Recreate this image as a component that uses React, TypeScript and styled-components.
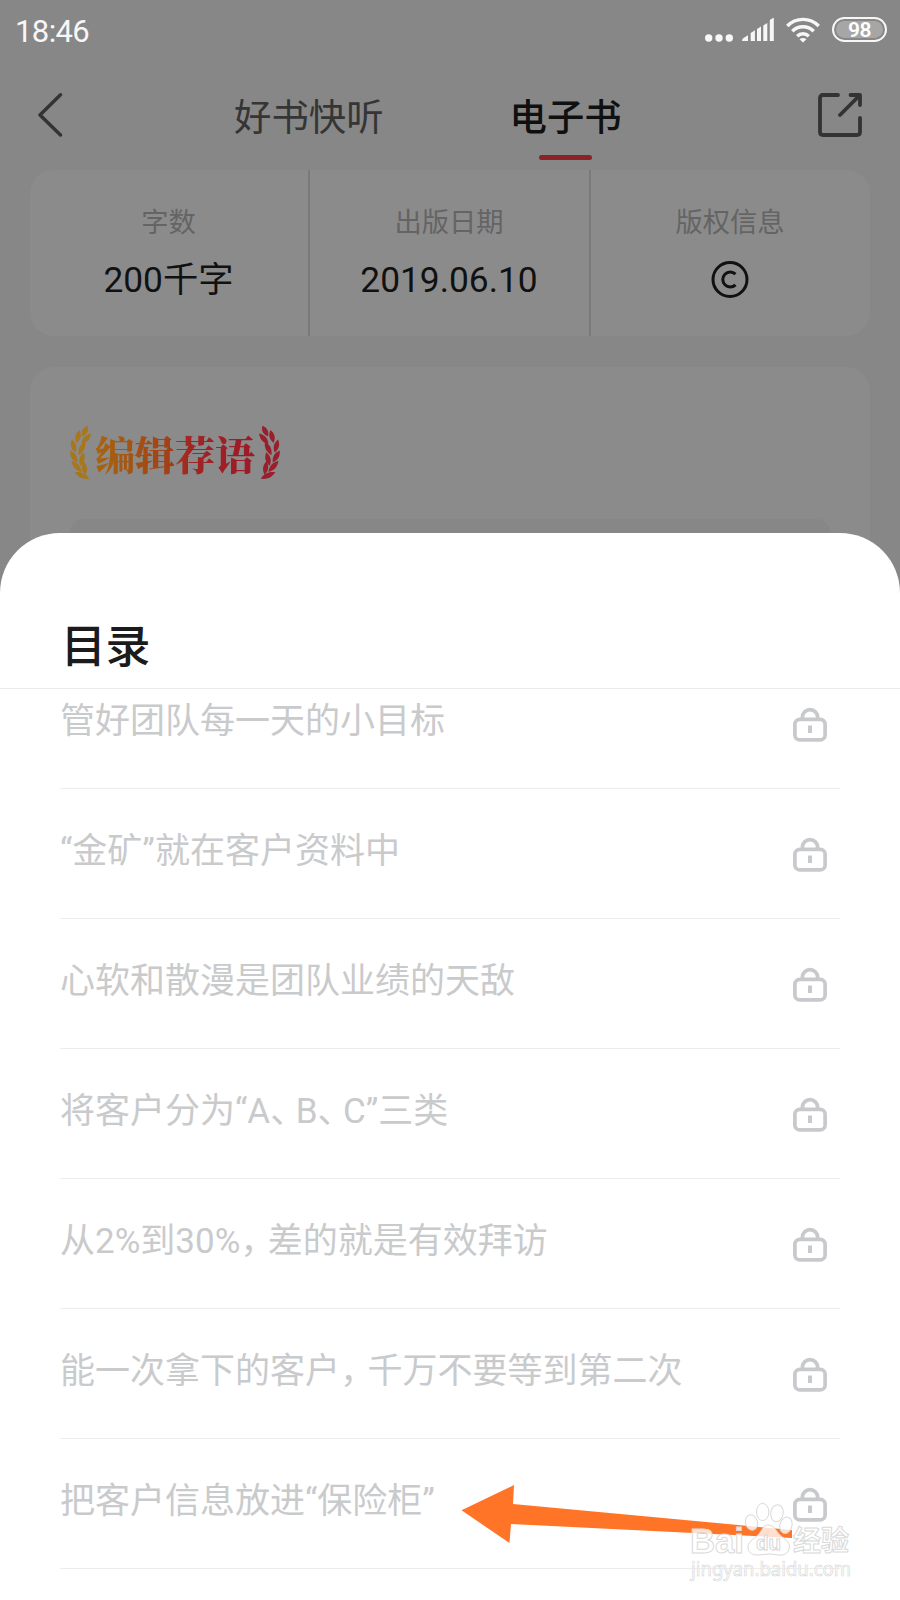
import React from "react";
import styled, { createGlobalStyle } from "styled-components";

const sans = `Roboto, "Noto Sans CJK SC", sans-serif`;

const GlobalStyle = createGlobalStyle`
  * { box-sizing: border-box; }
  body { margin: 0; background: #878787; font-family: ${sans}; }
  svg { display: block; }
`;

const Screen = styled.div`
  width: 900px;
  height: 1600px;
  position: relative;
  overflow: hidden;
  display: flex;
  flex-direction: column;
  background: #878787;
`;

const Backdrop = styled.div`
  height: 613px;
  flex: none;
  display: flex;
  flex-direction: column;
  background: #878787;
`;

const StatusBar = styled.div`
  height: 62px;
  flex: none;
  padding: 0 13px 0 15px;
  display: flex;
  align-items: center;
  justify-content: space-between;
`;

const Clock = styled.span`
  padding-top: 2px;
  font: 400 31px/60px ${sans};
  letter-spacing: -0.6px;
  color: #f7f7f7;
`;

const StatusIcons = styled.div`
  display: flex;
  align-items: center;
  margin-top: -3px;
`;

const IconGroup = styled.div`
  display: flex;
  gap: 9px;
  margin-top: 1px;

  svg:last-child { margin-left: 3px; }
`;

const Battery = styled.div`
  width: 55px;
  height: 25px;
  margin-left: 12px;
  border: 2px solid #f7f7f7;
  border-radius: 13px;
  padding: 2px;
  display: flex;
`;

const BatteryLevel = styled.span`
  flex: 1;
  border-radius: 9px;
  background: #a6a6a6;
  color: #fff;
  font: 600 21px/19px ${sans};
  letter-spacing: -0.5px;
  text-align: center;
`;

const NavBar = styled.nav`
  height: 108px;
  flex: none;
  padding: 29px 38px 0;
  display: flex;
  align-items: flex-start;
`;

const Tabs = styled.div`
  flex: 1;
  display: flex;
  justify-content: flex-start;
  padding: 4px 0 0 171px;
  gap: 126px;
`;

const Tab = styled.div<{ $active?: boolean }>`
  display: flex;
  flex-direction: column;
  align-items: center;
  gap: 14px;
  font: ${(p) => (p.$active ? 500 : 400)} 37.4px/46px ${sans};
  color: ${(p) => (p.$active ? "#101010" : "#353535")};

  &::after {
    content: "";
    width: 53px;
    height: 5px;
    border-radius: 3px;
    background: ${(p) => (p.$active ? "#8b2226" : "transparent")};
  }
`;

const Card = styled.section`
  margin: 0 30px;
  border-radius: 24px;
  background: #8b8b8b;
`;

const FactsCard = styled(Card)`
  height: 166px;
  flex: none;
  display: grid;
  grid-template-columns: 278px 281px 281px;
`;

const Fact = styled.div`
  padding: 34px 1px 0 0;
  display: flex;
  flex-direction: column;
  align-items: center;
  gap: 17px;

  & + & { border-left: 2px solid #7a7a7a; }
`;

const FactLabel = styled.div`
  font: 400 27.3px/38px ${sans};
  color: #646464;
`;

const FactValue = styled.div`
  height: 42px;
  display: flex;
  align-items: center;
  font: 400 35.3px/42px ${sans};
  color: #111;
`;

const ReviewCard = styled(Card)`
  flex: 1;
  min-height: 0;
  margin-top: 31px;
  padding: 58px 40px 0;
  border-radius: 24px 24px 0 0;
`;

const ReviewTitle = styled.div`
  height: 56px;
  display: flex;
  align-items: center;
  gap: 3px;
`;

const ReviewName = styled.h2`
  margin: 0;
  font: 900 40px/56px "Noto Serif CJK SC", "Noto Serif SC", "Noto Sans CJK SC", serif;
  color: transparent;
  background: linear-gradient(90deg, #a8650d, #a14217 45%, #a02523 60%, #9c1a28);
  background-clip: text;
  -webkit-background-clip: text;
`;

const Quote = styled.div`
  height: 88px;
  margin-top: 38px;
  border-radius: 14px;
  background: #878787;
`;

const Sheet = styled.main`
  height: 1067px;
  flex: none;
  margin-top: -80px;
  border-radius: 60px 60px 0 0;
  background: #fff;
  overflow: hidden;
`;

const SheetTitle = styled.h1`
  margin: 0;
  height: 156px;
  padding: 83px 0 0 61px;
  border-bottom: 1px solid #ebebeb;
  font: 500 45px/64px ${sans};
  letter-spacing: -0.5px;
  color: #1b1b1b;
`;

const ChapterViewport = styled.div`
  height: 911px;
  overflow: hidden;
`;

const ChapterList = styled.ul`
  list-style: none;
  margin: -30px 60px 0;
  padding: 0;
`;

const Chapter = styled.li`
  height: 130px;
  padding: 0 13px 4px 0;
  display: flex;
  align-items: center;
  justify-content: space-between;
  border-bottom: 1px solid #ededed;
  font: 400 35px/48px ${sans};
  color: #c9cacc;

  svg { margin-top: 5px; }
`;

const Punctuation = styled.span<{ $tighten: number }>`
  letter-spacing: -${(p) => p.$tighten}px;
`;

const Annotation = styled.svg`
  position: absolute;
  left: 440px;
  top: 1470px;
`;

const LockIcon = () => (
  <svg width="34" height="35" viewBox="0 0 34 35" fill="none" stroke="#c8c9cc" strokeWidth="3.7">
    <path d="M9.4 12V10.200a7.600 7.600 0 0 1 15.200 0V12" />
    <rect x="1.900" y="12.300" width="30.200" height="20.600" rx="5" />
    <path d="M17 18.500v7.500" strokeWidth="4" />
  </svg>
);

const BarsIcon = () => (
  <svg width="32" height="26" viewBox="0 0 32 26" fill="#f7f7f7">
    <path d="M0 24q0-2 1.500-3l4.500-2.700V24zM8.700 24v-8l4.200-2.700V24zM15 24V12l4-2.600V24zM21.300 24V8.400L25.300 6v18zM27.800 24V3.800q0-1.500 4-3V24z" />
  </svg>
);

const DotsIcon = () => (
  <svg width="28" height="26" viewBox="0 0 28 26" fill="#f7f7f7">
    {[3.7, 14, 24.3].map((x) => (
      <circle key={x} cx={x} cy="21" r="3.7" />
    ))}
  </svg>
);

const WifiIcon = () => (
  <svg width="34" height="26" viewBox="0 0 34 26" fill="none" stroke="#f7f7f7" strokeWidth="3.4">
    <path d="M1.300 9a22 22 0 0 1 31.400 0M6.300 14.200a15 15 0 0 1 21.400 0M11.200 19.200a8.200 8.200 0 0 1 11.600 0" />
    <path d="M17 25.500l-3.500-3.300q3.500-2.600 7 0z" fill="#f7f7f7" stroke="none" />
  </svg>
);

const BackIcon = () => (
  <svg width="25" height="46" viewBox="0 0 25 46" fill="none" stroke="#333" strokeWidth="3.400" strokeLinecap="round">
    <path d="M22.500 3.700L2 24l20.500 20" strokeLinejoin="round" />
  </svg>
);

const ShareIcon = () => (
  <svg width="44" height="48" viewBox="0 0 44 48" fill="none" stroke="#333" strokeWidth="3.800" strokeLinecap="round" strokeLinejoin="round">
    <path d="M20 4H5Q2 4 2 7v34q0 3 3 3h34q3 0 3-3V27" />
    <path d="M32.500 4H42v10M41.500 4.500L22 24" />
    <path d="M36 4h6v6z" fill="#333" stroke="none" />
  </svg>
);

const CopyrightIcon = () => (
  <svg width="38" height="38" viewBox="0 0 38 38" fill="none" stroke="#111" strokeWidth="3">
    <circle cx="19" cy="18.500" r="17" />
    <path d="M24.500 13.100a7.500 7.500 0 1 0 0 10.800" />
  </svg>
);

const leaves = [
  { x: 14.8, y: 5, r: 28, s: 6 },
  { x: 8, y: 10.500, r: 14, s: 6.6 },
  { x: 16.2, y: 12.8, r: 42, s: 7 },
  { x: 3.6, y: 20, r: -14, s: 6.8 },
  { x: 11.8, y: 22.500, r: 26, s: 7.4 },
  { x: 3.8, y: 30.500, r: -30, s: 7 },
  { x: 12, y: 33, r: 14, s: 7 },
  { x: 6.6, y: 40.500, r: -42, s: 7.6 },
  { x: 14.4, y: 42, r: -8, s: 6.8 },
  { x: 12, y: 49.500, r: -66, s: 8 },
];

const Laurel = ({ color, flip }: { color: string; flip?: boolean }) => (
  <svg width="22" height="54" viewBox="0 0 22 54" fill={color}>
    <g transform={flip ? "translate(22 0) scale(-1 1)" : undefined}>
      {leaves.map((l, i) => (
        <path
          key={i}
          transform={`translate(${l.x} ${l.y}) rotate(${l.r})`}
          d={`M0-${l.s}C3.600-2 3.200 2.500 0 ${l.s}C-3.200 2.500-3.600-2 0-${l.s}Z`}
        />
      ))}
    </g>
  </svg>
);

const ArrowAndWatermark = () => (
  <Annotation width="460" height="130" viewBox="440 1470 460 130">
    <path d="M461.500 1510.300L514 1485l-1 19L792 1530v8l-281-14-1.500 19z" fill="#ff7426" />
    <g fill="#fff" fillOpacity=".78" stroke="#d9d9d9" strokeWidth="1">
      <ellipse cx="751.500" cy="1522.500" rx="6" ry="7.800" transform="rotate(-15 751.500 1522.500)" />
      <ellipse cx="762.700" cy="1512" rx="6.200" ry="8.600" />
      <ellipse cx="777" cy="1513.200" rx="6.200" ry="8.600" transform="rotate(10 777 1513)" />
      <ellipse cx="786" cy="1525.300" rx="6" ry="8.300" transform="rotate(15 786 1525)" />
      <path d="M768 1525c6 0 8 6 12 10 6 5 11 8 9 14-2 7-9 6.500-14 5.500q-6-1-12 0c-6 1-14 1-15-6-1-6 5-9 10-13.500 4-4 5-10 10-10z" />
      <g fontFamily="Liberation Sans, sans-serif" fontWeight="700">
        <text x="690" y="1553" fontSize="35" textLength="54" lengthAdjust="spacingAndGlyphs">Bai</text>
        <text x="756" y="1550" fontSize="20" textLength="25" lengthAdjust="spacingAndGlyphs">du</text>
      </g>
      <text x="793" y="1551" fontSize="28" fontWeight="700" fontFamily="Noto Sans CJK SC, sans-serif" textLength="56">经验</text>
      <text x="691" y="1576" fontSize="20" fontWeight="400" fontFamily="Noto Sans, sans-serif" strokeWidth=".7" textLength="160" lengthAdjust="spacingAndGlyphs">jingyan.baidu.com</text>
    </g>
  </Annotation>
);

const facts: { label: string; value: React.ReactNode }[] = [
  { label: "字数", value: "200千字" },
  { label: "出版日期", value: "2019.06.10" },
  { label: "版权信息", value: <CopyrightIcon /> },
];

const chapters = [
  "管好团队每一天的小目标",
  "“金矿”就在客户资料中",
  "心软和散漫是团队业绩的天敌",
  "将客户分为“A、B、C”三类",
  "从2%到30%，差的就是有效拜访",
  "能一次拿下的客户，千万不要等到第二次",
  "把客户信息放进“保险柜”",
];

// Full-width commas are set on a narrower advance than the characters around them.
const ChapterTitle = ({ text }: { text: string }) => (
  <span>
    {text.split(/([、，])/).map((part, i) =>
      part === "、" || part === "，" ? (
        <Punctuation key={i} $tighten={part === "、" ? 9.5 : 7.5}>
          {part}
        </Punctuation>
      ) : (
        part
      )
    )}
  </span>
);

export default function App() {
  return (
    <>
      <GlobalStyle />
      <Screen lang="zh-CN">
        <Backdrop>
          <StatusBar>
            <Clock>18:46</Clock>
            <StatusIcons>
              <IconGroup>
                <DotsIcon />
                <BarsIcon />
                <WifiIcon />
              </IconGroup>
              <Battery>
                <BatteryLevel>98</BatteryLevel>
              </Battery>
            </StatusIcons>
          </StatusBar>
          <NavBar>
            <BackIcon />
            <Tabs>
              <Tab>好书快听</Tab>
              <Tab $active>电子书</Tab>
            </Tabs>
            <ShareIcon />
          </NavBar>
          <FactsCard>
            {facts.map((f) => (
              <Fact key={f.label}>
                <FactLabel>{f.label}</FactLabel>
                <FactValue>{f.value}</FactValue>
              </Fact>
            ))}
          </FactsCard>
          <ReviewCard>
            <ReviewTitle>
              <Laurel color="#a8761d" />
              <ReviewName>编辑荐语</ReviewName>
              <Laurel color="#981f2c" flip />
            </ReviewTitle>
            <Quote />
          </ReviewCard>
        </Backdrop>
        <Sheet>
          <SheetTitle>目录</SheetTitle>
          <ChapterViewport>
            <ChapterList>
              {chapters.map((c) => (
                <Chapter key={c}>
                  <ChapterTitle text={c} />
                  <LockIcon />
                </Chapter>
              ))}
            </ChapterList>
          </ChapterViewport>
        </Sheet>
        <ArrowAndWatermark />
      </Screen>
    </>
  );
}
